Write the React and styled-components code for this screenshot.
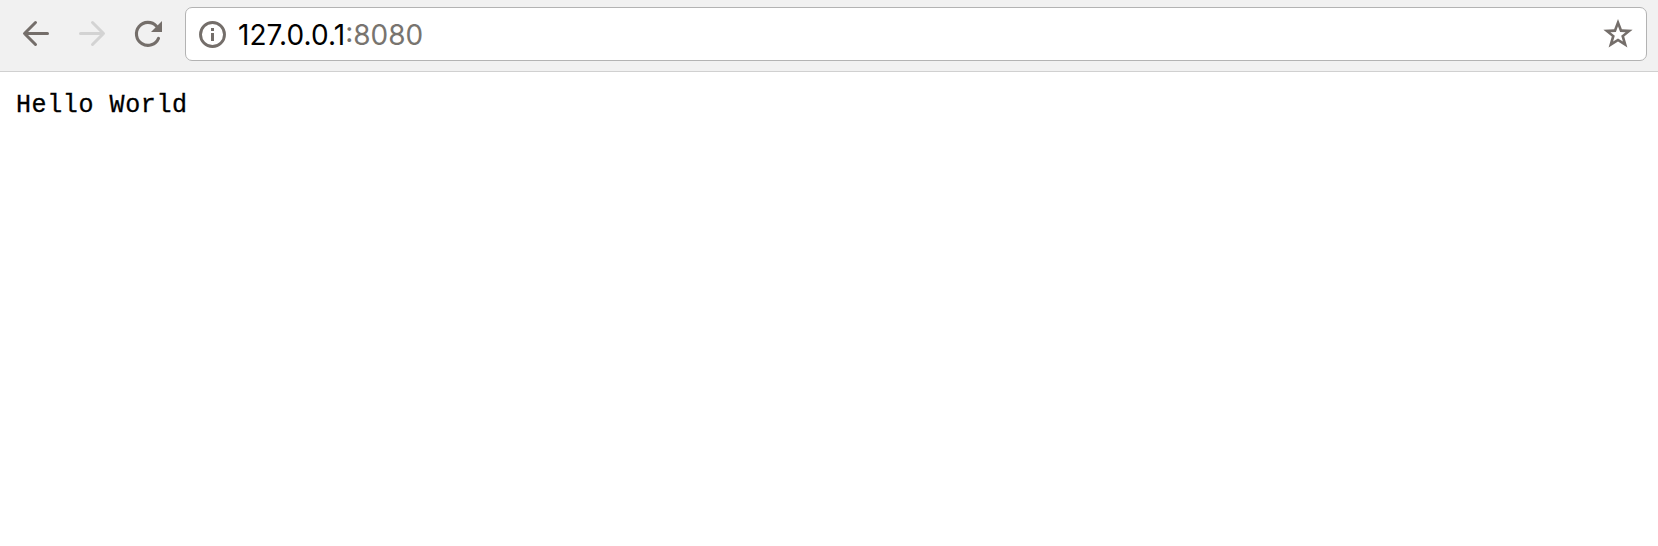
import React from 'react';
import styled, { createGlobalStyle } from 'styled-components';

const GlobalStyle = createGlobalStyle`
  body { margin: 0; background: #fff; }
  * { box-sizing: border-box; }
`;

const Window = styled.div`
  display: flex;
  flex-direction: column;
  height: 546px;
  overflow: hidden;
  background: #fff;
`;

const Toolbar = styled.header`
  display: flex;
  align-items: flex-start;
  height: 72px;
  padding: 7px 11px 0 16px;
  background: #f1f1f1;
  border-bottom: 1px solid #d0d0d0;
`;

const Navigation = styled.nav`
  display: flex;
  gap: 16px;
  width: 169px;
  padding-top: 7px;
`;

const IconButton = styled.button`
  display: flex;
  width: 40px;
  height: 40px;
  padding: 0;
  border: 0;
  background: none;
  color: ${({ disabled }) => (disabled ? '#d3d3d3' : '#746e6a')};
`;

const AddressBar = styled.div`
  display: flex;
  flex: 1;
  align-items: center;
  height: 54px;
  padding: 0 10px 0 11px;
  background: #fff;
  border: 1px solid #b3b3b3;
  border-radius: 7px;
  color: #746e6a;
`;

const Address = styled.span`
  flex: 1;
  margin-left: 9px;
  padding-top: 2px;
  font: 400 28px/34px Inter, "Liberation Sans", sans-serif;
  white-space: nowrap;
`;

const Host = styled.span`
  color: #000;
  letter-spacing: 0.08px;
`;

const Port = styled.span`
  color: #78746f;
`;

const Page = styled.main`
  flex: 1;
  padding: 19px 16px;
`;

const Output = styled.pre`
  margin: 0;
  color: #000;
  font: 400 25px/30px "Liberation Mono", monospace;
  letter-spacing: 0.6px;
  -webkit-text-stroke: 0.3px #000;
`;

const BackIcon = () => (
  <svg width="40" height="40" fill="none" stroke="currentColor" strokeWidth="3" strokeLinecap="round" strokeLinejoin="round">
    <path d="M31.5 19.5H8.7M19.5 8.5L8.5 19.5L19.5 30.5" />
  </svg>
);

const ForwardIcon = () => (
  <svg width="40" height="40" fill="none" stroke="currentColor" strokeWidth="3" strokeLinecap="round" strokeLinejoin="round">
    <path d="M8.5 19.5H31.3M20.5 8.5L31.5 19.5L20.5 30.5" />
  </svg>
);

const ReloadIcon = () => (
  <svg width="40" height="40" fill="none">
    <path d="M30.5 24.4A11.5 11.5 0 1 1 28.5 12.2" stroke="currentColor" strokeWidth="3.1" strokeLinecap="round" />
    <path d="M34 7V18H23Z" fill="currentColor" />
  </svg>
);

const InfoIcon = () => (
  <svg width="32" height="32" fill="none">
    <circle cx="15.5" cy="16.5" r="12" stroke="currentColor" strokeWidth="2.9" />
    <path d="M14 10h3v3h-3zM14 15h3v8h-3z" fill="currentColor" />
  </svg>
);

const StarIcon = () => (
  <svg width="34" height="34" fill="none">
    <path
      d="M16 2L19.9 12.2L30.6 12.8L22.2 19.5L25.4 30.6L16 24.5L6.6 30.6L9.8 19.5L1.4 12.8L12.1 12.2ZM16 9.2L13.9 15L8.4 15.2L12.8 18.7L11.1 24.6L16 21.4L20.9 24.6L19.2 18.7L23.6 15.2L18.1 15Z"
      fill="currentColor"
      fillRule="evenodd"
    />
  </svg>
);

export default function App() {
  return (
    <Window>
      <GlobalStyle />
      <Toolbar>
        <Navigation>
          <IconButton aria-label="Back"><BackIcon /></IconButton>
          <IconButton aria-label="Forward" disabled><ForwardIcon /></IconButton>
          <IconButton aria-label="Reload"><ReloadIcon /></IconButton>
        </Navigation>
        <AddressBar>
          <InfoIcon />
          <Address><Host>127.0.0.1</Host><Port>:8080</Port></Address>
          <StarIcon />
        </AddressBar>
      </Toolbar>
      <Page>
        <Output>Hello World</Output>
      </Page>
    </Window>
  );
}
